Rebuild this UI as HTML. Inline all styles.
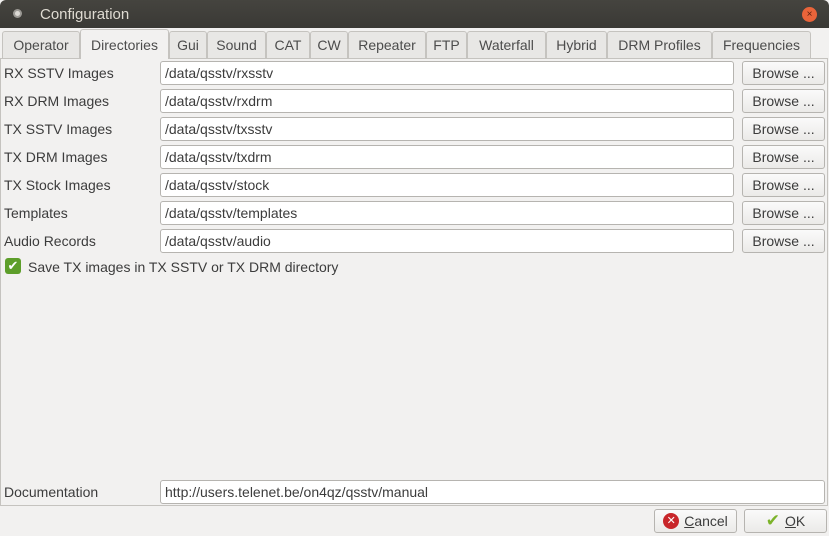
<!DOCTYPE html><html><head><style>
body{margin:0;width:829px;height:536px;background:#f2f1f0;font-family:"Liberation Sans",sans-serif;font-size:14px;color:#3c3c3c;position:relative;overflow:hidden}
.a{position:absolute}
.title{left:0;top:0;width:829px;height:28px;background:linear-gradient(#45443f,#3a3935);color:#dfdbd2;border-radius:6px 6px 0 0}
.tab{position:absolute;top:31px;height:27px;background:#e8e7e5;border:1px solid #c5c3bf;border-bottom:none;border-radius:3px 3px 0 0;box-sizing:border-box;text-align:center;line-height:27px;color:#4c4c4c;font-size:14px}
.tab.act{top:29px;height:30px;background:#f2f1f0;z-index:2;line-height:30px}
.panel{left:0;top:58px;width:828px;height:448px;border:1px solid #c5c3bf;box-sizing:border-box}
.lbl{left:4px;font-size:14px}
.in{left:160px;width:574px;height:24px;background:#fff;border:1px solid #b6b4b0;border-radius:3px;box-sizing:border-box;padding-left:4px;line-height:22px}
.btn{left:742px;width:83px;height:24px;border:1px solid #b6b4b0;border-radius:3px;box-sizing:border-box;background:linear-gradient(#fafafa,#ebeae8);display:flex;align-items:center;justify-content:center}
</style></head><body>
<div class="a title"><div class="a" style="left:13px;top:9px;width:9px;height:9px;border-radius:50%;background:#9c9a95"></div><div class="a" style="left:15px;top:11px;width:5px;height:5px;border-radius:50%;background:#dcdad5"></div>
<div class="a" style="left:40px;top:6px;font-size:15px">Configuration</div>
<div class="a" style="left:802px;top:7px;width:15px;height:15px;border-radius:50%;background:#e9643a;color:#5a2010;font-size:10px;text-align:center;line-height:15px">×</div></div>
<div class="tab" style="left:2px;width:78px">Operator</div>
<div class="tab act" style="left:80px;width:89px">Directories</div>
<div class="tab" style="left:169px;width:38px">Gui</div>
<div class="tab" style="left:207px;width:59px">Sound</div>
<div class="tab" style="left:266px;width:44px">CAT</div>
<div class="tab" style="left:310px;width:38px">CW</div>
<div class="tab" style="left:348px;width:78px">Repeater</div>
<div class="tab" style="left:426px;width:41px">FTP</div>
<div class="tab" style="left:467px;width:79px">Waterfall</div>
<div class="tab" style="left:546px;width:61px">Hybrid</div>
<div class="tab" style="left:607px;width:105px">DRM Profiles</div>
<div class="tab" style="left:712px;width:99px">Frequencies</div>
<div class="a panel"></div>
<div class="a lbl" style="top:65px">RX SSTV Images</div><div class="a in" style="top:61px">/data/qsstv/rxsstv</div><div class="a btn" style="top:61px">Browse ...</div>
<div class="a lbl" style="top:93px">RX DRM Images</div><div class="a in" style="top:89px">/data/qsstv/rxdrm</div><div class="a btn" style="top:89px">Browse ...</div>
<div class="a lbl" style="top:121px">TX SSTV Images</div><div class="a in" style="top:117px">/data/qsstv/txsstv</div><div class="a btn" style="top:117px">Browse ...</div>
<div class="a lbl" style="top:149px">TX DRM Images</div><div class="a in" style="top:145px">/data/qsstv/txdrm</div><div class="a btn" style="top:145px">Browse ...</div>
<div class="a lbl" style="top:177px">TX Stock Images</div><div class="a in" style="top:173px">/data/qsstv/stock</div><div class="a btn" style="top:173px">Browse ...</div>
<div class="a lbl" style="top:205px">Templates</div><div class="a in" style="top:201px">/data/qsstv/templates</div><div class="a btn" style="top:201px">Browse ...</div>
<div class="a lbl" style="top:233px">Audio Records</div><div class="a in" style="top:229px">/data/qsstv/audio</div><div class="a btn" style="top:229px">Browse ...</div>
<div class="a" style="left:5px;top:258px;width:16px;height:16px;border-radius:3px;background:#5d9e2a;color:#fff;font-size:13px;text-align:center;line-height:16px">✔</div>
<div class="a" style="left:28px;top:259px">Save TX images in TX SSTV or TX DRM directory</div>
<div class="a lbl" style="top:484px">Documentation</div>
<div class="a in" style="top:480px;width:665px">http://users.telenet.be/on4qz/qsstv/manual</div>
<div class="a btn" style="left:654px;top:509px;width:83px"><span style="display:inline-block;width:16px;height:16px;border-radius:50%;background:#c8262a;color:#fff;font-size:11px;line-height:16px;text-align:center;margin-right:5px">✕</span><span><u>C</u>ancel</span></div>
<div class="a btn" style="left:744px;top:509px;width:83px"><span style="color:#7cb32a;font-size:17px;margin-right:5px">✔</span><span><u>O</u>K</span></div>
</body></html>
